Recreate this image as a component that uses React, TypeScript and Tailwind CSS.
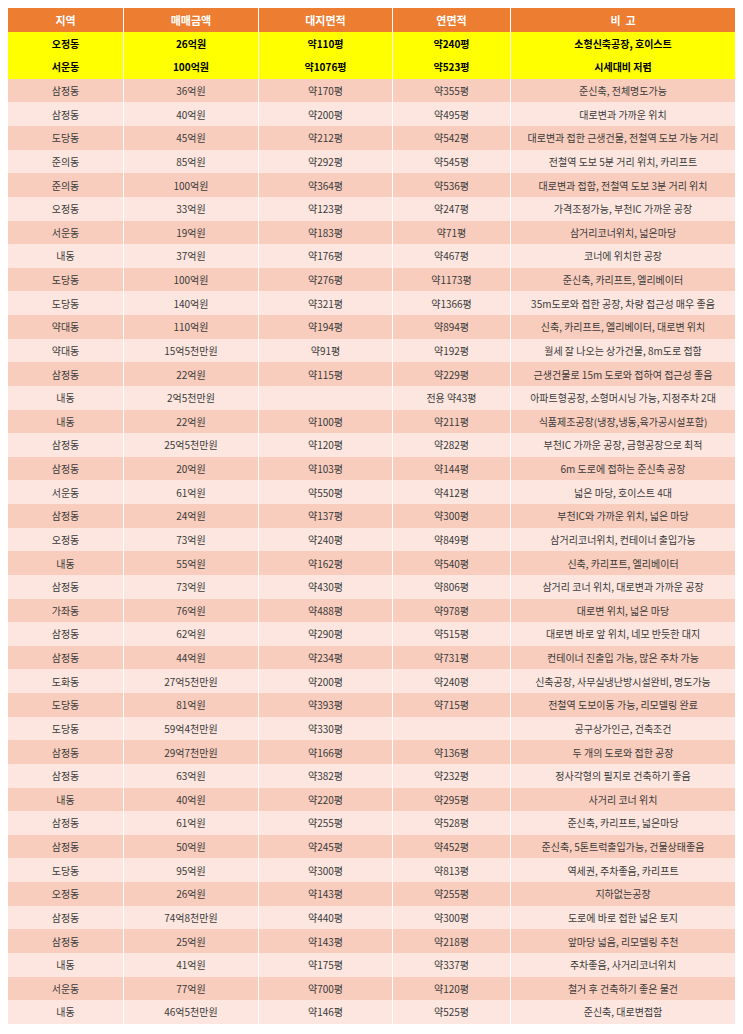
import React from 'react';

type Row = [string, string, string, string, string];

const highlighted: Row[] = [
  ['오정동', '26억원', '약110평', '약240평', '소형신축공장, 호이스트'],
  ['서운동', '100억원', '약1076평', '약523평', '시세대비 저렴'],
];

const rows: Row[] = [
  ['삼정동', '36억원', '약170평', '약355평', '준신축, 전체명도가능'],
  ['삼정동', '40억원', '약200평', '약495평', '대로변과 가까운 위치'],
  ['도당동', '45억원', '약212평', '약542평', '대로변과 접한 근생건물, 전철역 도보 가능 거리'],
  ['준의동', '85억원', '약292평', '약545평', '전철역 도보 5분 거리 위치, 카리프트'],
  ['준의동', '100억원', '약364평', '약536평', '대로변과 접함, 전철역 도보 3분 거리 위치'],
  ['오정동', '33억원', '약123평', '약247평', '가격조정가능, 부천IC 가까운 공장'],
  ['서운동', '19억원', '약183평', '약71평', '삼거리코너위치, 넓은마당'],
  ['내동', '37억원', '약176평', '약467평', '코너에 위치한 공장'],
  ['도당동', '100억원', '약276평', '약1173평', '준신축, 카리프트, 엘리베이터'],
  ['도당동', '140억원', '약321평', '약1366평', '35m도로와 접한 공장, 차량 접근성 매우 좋음'],
  ['약대동', '110억원', '약194평', '약894평', '신축, 카리프트, 엘리베이터, 대로변 위치'],
  ['약대동', '15억5천만원', '약91평', '약192평', '월세 잘 나오는 상가건물, 8m도로 접함'],
  ['삼정동', '22억원', '약115평', '약229평', '근생건물로 15m 도로와 접하여 접근성 좋음'],
  ['내동', '2억5천만원', '', '전용 약43평', '아파트형공장, 소형머시닝 가능, 지정주차 2대'],
  ['내동', '22억원', '약100평', '약211평', '식품제조공장(냉장,냉동,육가공시설포함)'],
  ['삼정동', '25억5천만원', '약120평', '약282평', '부천IC 가까운 공장, 금형공장으로 최적'],
  ['삼정동', '20억원', '약103평', '약144평', '6m 도로에 접하는 준신축 공장'],
  ['서운동', '61억원', '약550평', '약412평', '넓은 마당, 호이스트 4대'],
  ['삼정동', '24억원', '약137평', '약300평', '부천IC와 가까운 위치, 넓은 마당'],
  ['오정동', '73억원', '약240평', '약849평', '삼거리코너위치, 컨테이너 출입가능'],
  ['내동', '55억원', '약162평', '약540평', '신축, 카리프트, 엘리베이터'],
  ['삼정동', '73억원', '약430평', '약806평', '삼거리 코너 위치, 대로변과 가까운 공장'],
  ['가좌동', '76억원', '약488평', '약978평', '대로변 위치, 넓은 마당'],
  ['삼정동', '62억원', '약290평', '약515평', '대로변 바로 앞 위치, 네모 반듯한 대지'],
  ['삼정동', '44억원', '약234평', '약731평', '컨테이너 진출입 가능, 많은 주차 가능'],
  ['도화동', '27억5천만원', '약200평', '약240평', '신축공장, 사무실냉난방시설완비, 명도가능'],
  ['도당동', '81억원', '약393평', '약715평', '전철역 도보이동 가능, 리모델링 완료'],
  ['도당동', '59억4천만원', '약330평', '', '공구상가인근, 건축조건'],
  ['삼정동', '29억7천만원', '약166평', '약136평', '두 개의 도로와 접한 공장'],
  ['삼정동', '63억원', '약382평', '약232평', '정사각형의 필지로 건축하기 좋음'],
  ['내동', '40억원', '약220평', '약295평', '사거리 코너 위치'],
  ['삼정동', '61억원', '약255평', '약528평', '준신축, 카리프트, 넓은마당'],
  ['삼정동', '50억원', '약245평', '약452평', '준신축, 5톤트럭출입가능, 건물상태좋음'],
  ['도당동', '95억원', '약300평', '약813평', '역세권, 주차좋음, 카리프트'],
  ['오정동', '26억원', '약143평', '약255평', '지하없는공장'],
  ['삼정동', '74억8천만원', '약440평', '약300평', '도로에 바로 접한 넓은 토지'],
  ['삼정동', '25억원', '약143평', '약218평', '앞마당 넓음, 리모델링 추천'],
  ['내동', '41억원', '약175평', '약337평', '주차좋음, 사거리코너위치'],
  ['서운동', '77억원', '약700평', '약120평', '철거 후 건축하기 좋은 물건'],
  ['내동', '46억5천만원', '약146평', '약525평', '준신축, 대로변접함'],
];

const headers = ['지역', '매매금액', '대지면적', '연면적', '비  고'];
const cols = 'grid grid-cols-[116px_135px_134px_118px_224px]';
const cell = 'flex items-center justify-center border-r border-white last:border-r-0 whitespace-pre';

export default function App() {
  return (
    <div
      className="min-h-screen bg-white pl-[8px] pt-[8px]"
      style={{ fontFamily: '"Noto Sans CJK KR", "Noto Sans", sans-serif' }}
    >
      <div className="w-[727px]">
        <div className={`${cols} h-[23.5px] bg-[#ed7d31] text-[11px] font-bold text-white`}>
          {headers.map((h) => (
            <div key={h} className={cell}>{h}</div>
          ))}
        </div>

        {highlighted.map((r, i) => (
          <div key={'h' + i} className={`${cols} h-[23.63px] bg-[#ffff00] text-[10px] font-bold text-black`}>
            {r.map((c, j) => (
              <div key={j} className={cell}>{c}</div>
            ))}
          </div>
        ))}

        {rows.map((r, i) => (
          <div
            key={i}
            className={`${cols} h-[23.63px] text-[10px] text-[#3a3a3a] ${i % 2 === 0 ? 'bg-[#f8cdbd]' : 'bg-[#fce6df]'}`}
          >
            {r.map((c, j) => (
              <div key={j} className={cell}>{c}</div>
            ))}
          </div>
        ))}
      </div>
    </div>
  );
}
